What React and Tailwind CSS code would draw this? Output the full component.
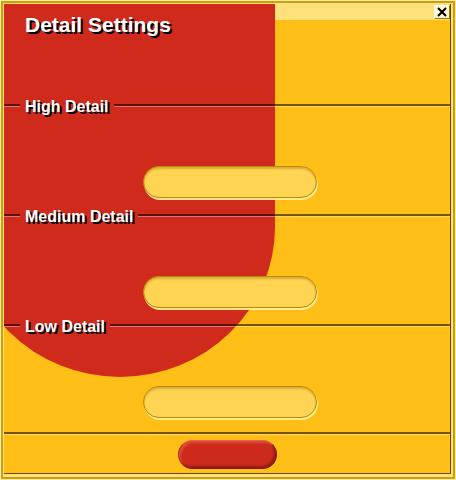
import React from "react";

const sections = ["High Detail", "Medium Detail", "Low Detail"];

const Groove = ({ className = "" }) => (
  <div className={`h-[3px] border-t-2 border-t-black/55 border-b border-b-white/35 ${className}`} />
);

const Pill = () => (
  <div className="ml-[139px] h-[32px] w-[174px] rounded-full border border-[#b98a06] bg-[#ffd452] shadow-[inset_0_2px_2px_rgba(150,100,0,0.35),1px_2px_0_rgba(255,236,150,0.95)]" />
);

export default function App() {
  return (
    <div
      className="w-[456px] h-[480px] border border-[#fff0a8] bg-[#fff0a8]"
      style={{ fontFamily: '"Liberation Sans", Arial, sans-serif' }}
    >
      <div className="h-full border-2 border-[#cf9d0e]">
        <div className="h-full border-l border-t border-[#ffe27a] bg-[#ffe27a] pr-[2px] pb-[3px]">
          <div className="relative h-full overflow-hidden border-r border-b border-[#6b4a00] bg-[#ffbf16]">
            {/* title strip */}
            <div className="flex h-[16px] justify-end bg-[#ffe07a]">
              <button className="mt-[1px] flex h-[14px] w-[16px] items-center justify-center border border-t-white border-l-white border-r-[#a07a10] border-b-[#a07a10] bg-[#fff7d4]">
                <svg width="10" height="10" viewBox="0 0 10 10">
                  <path d="M1 1L9 9M9 1L1 9" stroke="#000" strokeWidth="2" />
                </svg>
              </button>
            </div>

            {/* red backdrop */}
            <div className="absolute left-[-39px] top-0 h-[373px] w-[310px] rounded-b-[155px_150px] bg-[#cf2a1b]" />

            <div className="relative">
              <h1 className="-mt-[7px] h-[24px] pl-[21px] text-[21px] leading-[24px] font-bold text-white [text-shadow:2px_2px_0_#000]">
                Detail Settings
              </h1>

              <div className="pt-[58px]">
                {sections.map((label) => (
                  <div key={label} className="pb-[7px]">
                    <div className="flex h-[22px] items-start">
                      <Groove className="mt-[9px] w-[16px]" />
                      <span className="mt-[2px] px-[5px] text-[16px] leading-[20px] font-bold text-white [text-shadow:2px_2px_0_#000]">
                        {label}
                      </span>
                      <Groove className="mt-[9px] flex-1" />
                    </div>
                    <div className="mt-[49px]">
                      <Pill />
                    </div>
                  </div>
                ))}
              </div>

              <Groove className="mt-[7px]" />
              <div className="mt-[5px] flex justify-center">
                <button className="h-[29px] w-[99px] rounded-full border border-[#7a1a10] border-t-[#e8604a] border-l-[#b83020] bg-[#cc2a1c] shadow-[inset_-2px_-2px_2px_rgba(90,10,0,0.45),inset_2px_2px_2px_rgba(255,140,110,0.35)]" />
              </div>
            </div>
          </div>
        </div>
      </div>
    </div>
  );
}
